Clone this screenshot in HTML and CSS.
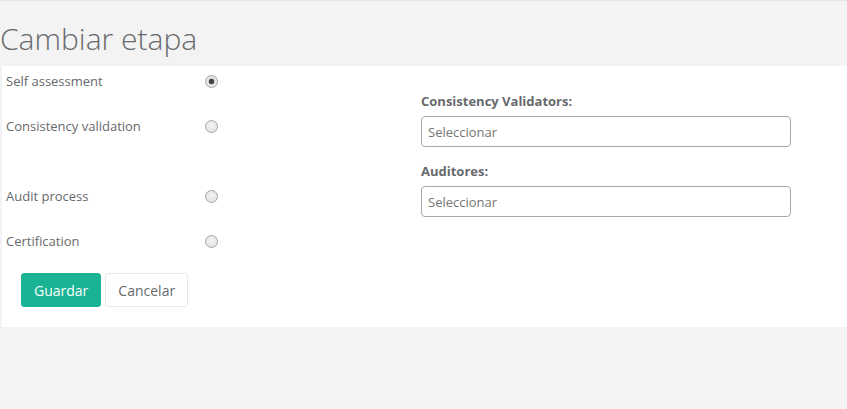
FILE: index.html
```html
<!DOCTYPE html>
<html lang="es">
<head>
    <meta charset="UTF-8">
    <title>Cambiar etapa</title>
    <link rel="stylesheet" href="styles.css">
</head>
<body>
    <h2 class="page-title">Cambiar etapa</h2>
    <form class="panel">
        <div class="columns">
            <div class="stages">
                <label class="stage">
                    <span class="stage-name">Self assessment</span>
                    <input type="radio" name="etapa" value="self" checked>
                </label>
                <label class="stage tall">
                    <span class="stage-name">Consistency validation</span>
                    <input type="radio" name="etapa" value="consistency">
                </label>
                <label class="stage">
                    <span class="stage-name">Audit process</span>
                    <input type="radio" name="etapa" value="audit">
                </label>
                <label class="stage last">
                    <span class="stage-name">Certification</span>
                    <input type="radio" name="etapa" value="certification">
                </label>
            </div>
            <div class="assign">
                <label class="field-label" for="validators">Consistency Validators:</label>
                <input type="text" id="validators" class="field" placeholder="Seleccionar">

                <label class="field-label" for="auditores">Auditores:</label>
                <input type="text" id="auditores" class="field" placeholder="Seleccionar">
            </div>
        </div>
        <div class="button-group">
            <button type="button" class="btn primary">Guardar</button>
            <button type="button" class="btn">Cancelar</button>
        </div>
    </form>
</body>
</html>
```

FILE: styles.css
```css
* {
    box-sizing: border-box;
}
body {
    margin: 0;
    background-color: #f3f3f4;
    border-top: 1px solid #e4e4e4;
    font-family: "Open Sans", Arial, sans-serif;
    font-size: 13px;
    color: #676a6c;
}
.page-title {
    margin: 0;
    padding: 20px 0 0 0;
    height: 65px;
    font-size: 30px;
    font-weight: 300;
    line-height: 36px;
    color: #676a6c;
}
.panel {
    background-color: #fff;
    margin-left: 2px;
    padding: 5px 0 20px 0;
}
.columns {
    display: flex;
}
.stages {
    width: 419px;
    padding-left: 4px;
}
.stage {
    display: flex;
    align-items: flex-start;
    height: 45px;
    line-height: 20px;
}
.stage.tall {
    height: 70px;
}
.stage.last {
    height: 20px;
}
.stage-name {
    width: 199px;
}
.stage input {
    appearance: none;
    -webkit-appearance: none;
    width: 13px;
    height: 13px;
    margin: 4px 0 0 0;
    border: 1px solid #a6a6a6;
    border-radius: 50%;
    background: radial-gradient(circle at 50% 40%, #f4f4f4, #dcdcdc);
}
.stage input:checked {
    background: radial-gradient(circle, #444 0, #444 2.5px, #e8e8e8 3.2px, #dcdcdc 100%);
}
.assign {
    display: flex;
    flex-direction: column;
    padding-top: 20px;
}
.field-label {
    display: block;
    font-weight: 700;
    line-height: 20px;
    margin-bottom: 5px;
}
.field {
    width: 370px;
    height: 31px;
    padding: 0 6px;
    margin-bottom: 14px;
    border: 1px solid #a9a9a9;
    border-radius: 4px;
    font-family: "Open Sans", Arial, sans-serif;
    font-size: 13px;
    color: #676a6c;
}
.field::placeholder {
    color: #757575;
}
.field:last-child {
    margin-bottom: 0;
}
.button-group {
    display: flex;
    gap: 4px;
    margin-top: 22px;
    padding-left: 19px;
}
.btn {
    height: 34px;
    padding: 0 12px;
    border: 1px solid #e7eaec;
    border-radius: 3px;
    background-color: #fff;
    font-family: "Open Sans", Arial, sans-serif;
    font-size: 14px;
    color: #676a6c;
    cursor: pointer;
}
.btn.primary {
    background-color: #1ab394;
    border-color: #1ab394;
    color: #fff;
}
```
